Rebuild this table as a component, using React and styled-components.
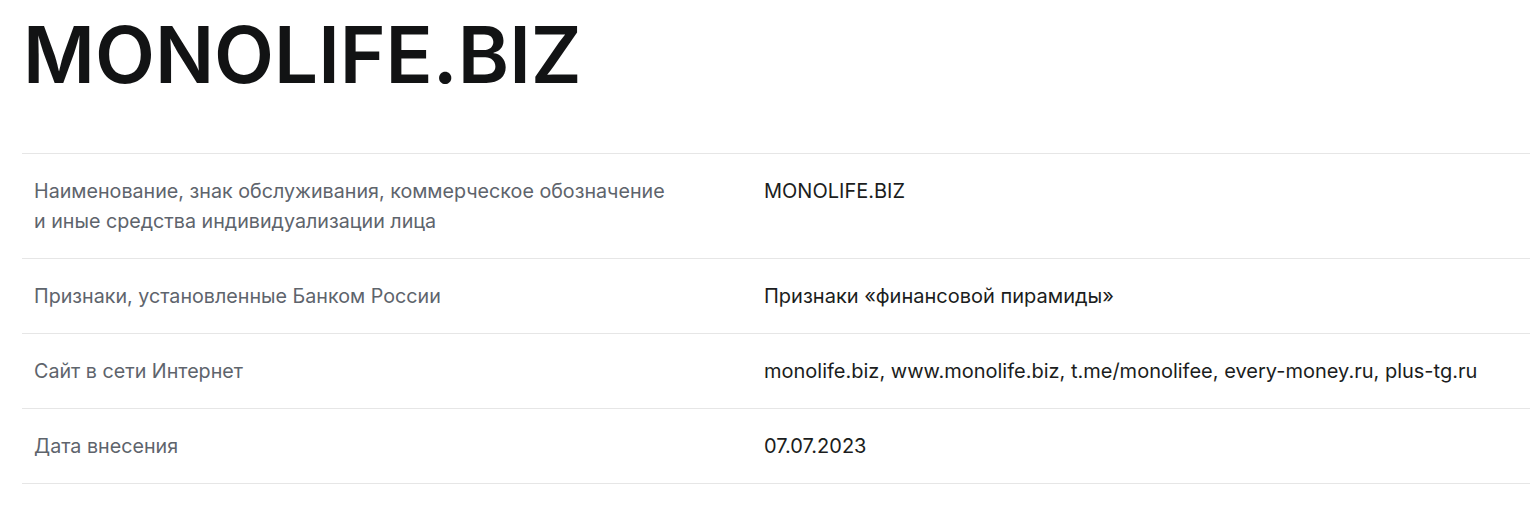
import React from "react";
import styled, { createGlobalStyle } from "styled-components";

const GlobalStyle = createGlobalStyle`
  html, body {
    margin: 0;
    padding: 0;
    background: #ffffff;
    overflow: hidden;
  }
  body {
    font-family: "Inter", "Roboto", sans-serif;
  }
`;

const Page = styled.div`
  padding: 0 0 0 22px;
`;

const Title = styled.h1`
  margin: 0;
  padding: 10px 0 0 1px;
  height: 153px;
  box-sizing: border-box;
  font-family: "Inter", sans-serif;
  font-weight: 600;
  font-size: 78px;
  line-height: 90px;
  letter-spacing: 0;
  color: #121314;
`;

const Table = styled.div`
  width: 1508px;
  border-top: 1px solid #e6e6e6;
`;

const Row = styled.div`
  display: grid;
  grid-template-columns: 730px 1fr;
  border-bottom: 1px solid #e6e6e6;
`;

const Cell = styled.div`
  padding: 22px 12px 22px;
  font-size: ${(p) => (p.$label ? "19.7px" : "20px")};
  line-height: 30px;
  color: ${(p) => (p.$label ? "#5e646c" : "#1b1d20")};
`;

const rows = [
  {
    label: (
      <>
        Наименование, знак обслуживания, коммерческое обозначение
        <br />и иные средства индивидуализации лица
      </>
    ),
    value: "MONOLIFE.BIZ",
  },
  { label: "Признаки, установленные Банком России", value: "Признаки «финансовой пирамиды»" },
  {
    label: "Сайт в сети Интернет",
    value: "monolife.biz, www.monolife.biz, t.me/monolifee, every-money.ru, plus-tg.ru",
  },
  { label: "Дата внесения", value: "07.07.2023" },
];

export default function App() {
  return (
    <Page>
      <GlobalStyle />
      <Title>MONOLIFE.BIZ</Title>
      <Table>
        {rows.map((r, i) => (
          <Row key={i}>
            <Cell $label>{r.label}</Cell>
            <Cell>{r.value}</Cell>
          </Row>
        ))}
      </Table>
    </Page>
  );
}
